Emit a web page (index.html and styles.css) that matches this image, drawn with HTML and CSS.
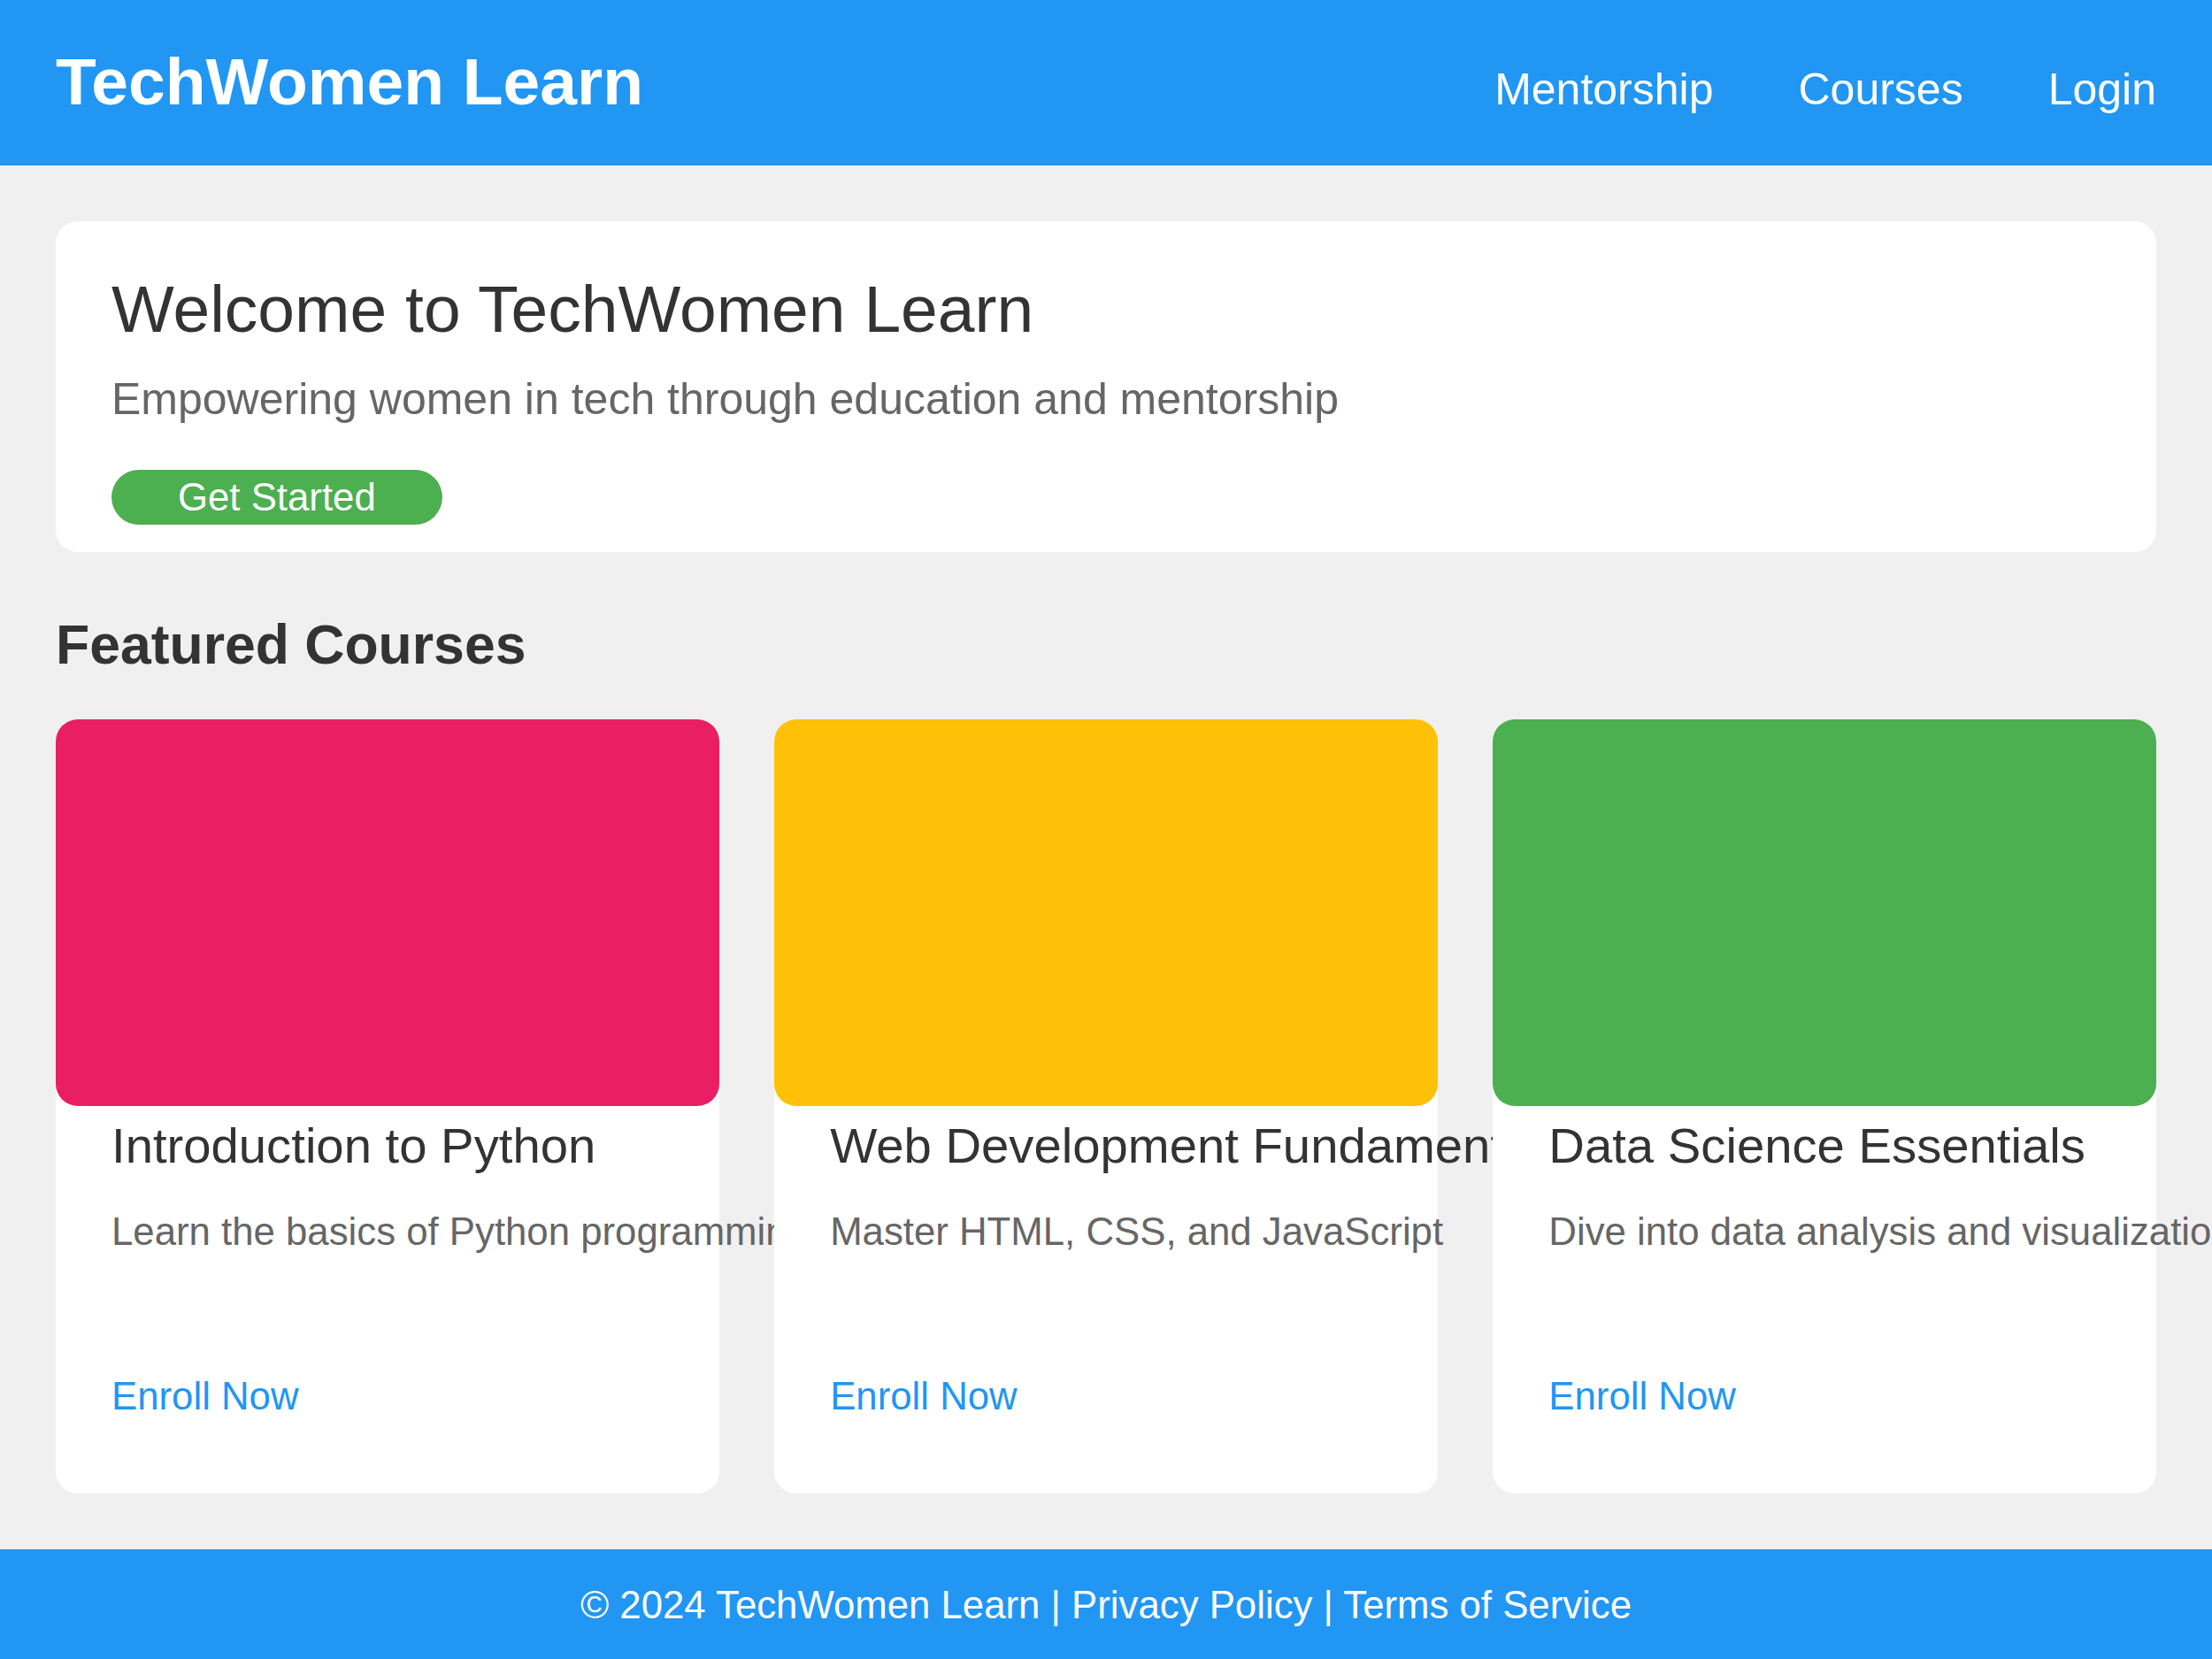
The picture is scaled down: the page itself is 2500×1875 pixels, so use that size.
FILE: index.html
```html
<!DOCTYPE html>
<html lang="en">
<head>
<meta charset="utf-8">
<title>TechWomen Learn</title>
<link rel="stylesheet" href="styles.css">
</head>
<body>
<header class="site-header">
  <div class="logo">TechWomen Learn</div>
  <nav class="nav">
    <a href="#" class="nav-link">Mentorship</a>
    <a href="#" class="nav-link">Courses</a>
    <a href="#" class="nav-link">Login</a>
  </nav>
</header>
<main class="main">
  <section class="hero">
    <h1 class="hero-title">Welcome to TechWomen Learn</h1>
    <p class="hero-text">Empowering women in tech through education and mentorship</p>
    <a href="#" class="btn">Get Started</a>
  </section>
  <h2 class="section-title">Featured Courses</h2>
  <div class="courses">
    <article class="course">
      <div class="course-img pink"></div>
      <div class="course-body">
        <h3 class="course-title">Introduction to Python</h3>
        <p class="course-desc">Learn the basics of Python programming</p>
        <a href="#" class="course-link">Enroll Now</a>
      </div>
    </article>
    <article class="course">
      <div class="course-img amber"></div>
      <div class="course-body">
        <h3 class="course-title">Web Development Fundamentals</h3>
        <p class="course-desc">Master HTML, CSS, and JavaScript</p>
        <a href="#" class="course-link">Enroll Now</a>
      </div>
    </article>
    <article class="course">
      <div class="course-img green"></div>
      <div class="course-body">
        <h3 class="course-title">Data Science Essentials</h3>
        <p class="course-desc">Dive into data analysis and visualization</p>
        <a href="#" class="course-link">Enroll Now</a>
      </div>
    </article>
  </div>
</main>
<footer class="site-footer">© 2024 TechWomen Learn | Privacy Policy | Terms of Service</footer>
</body>
</html>
```

FILE: styles.css
```css
html, body {
  margin: 0;
  padding: 0;
  overflow-x: hidden;
}
body {
  background: #f0f0f0;
  font-family: "Liberation Sans", Arial, sans-serif;
  color: #333;
}
.site-header {
  box-sizing: border-box;
  height: 187px;
  background: #2196f3;
  display: flex;
  justify-content: space-between;
  align-items: baseline;
  padding: 47px 63px 0;
}
.logo {
  font-size: 75px;
  font-weight: bold;
  line-height: 90px;
  color: #fff;
}
.nav {
  display: flex;
  align-items: baseline;
  gap: 96px;
}
.nav-link {
  font-size: 50px;
  line-height: 60px;
  color: #fff;
  text-decoration: none;
}
.main {
  padding: 63px 63px 63px;
}
.hero {
  background: #fff;
  border-radius: 25px;
  padding: 62px 64px 31px 63px;
}
.hero-title {
  margin: 0;
  font-size: 75px;
  font-weight: normal;
  line-height: 75px;
  color: #333;
}
.hero-text {
  margin: 34px 0 0;
  font-size: 50px;
  line-height: 60px;
  color: #666;
}
.btn {
  display: inline-block;
  margin-top: 50px;
  height: 62px;
  line-height: 62px;
  padding: 0 75px;
  border-radius: 31px;
  background: #4caf50;
  color: #fff;
  font-size: 43.75px;
  text-decoration: none;
  vertical-align: top;
}
.section-title {
  margin: 67px 0 0;
  font-size: 62.5px;
  line-height: 75px;
  font-weight: bold;
  color: #333;
}
.courses {
  margin-top: 47px;
  display: grid;
  grid-template-columns: repeat(3, minmax(0, 1fr));
  gap: 62.5px;
}
.course {
  position: relative;
  background: #fff;
  border-radius: 25px;
  min-width: 0;
}
.course-img {
  height: 437px;
  border-radius: 25px;
}
.pink { background: #e91e63; }
.amber { background: #ffc107; }
.green { background: #4caf50; }
.course-body {
  padding: 11px 0 83px 63px;
  white-space: nowrap;
}
.course-title {
  margin: 0;
  font-size: 56.25px;
  line-height: 67.5px;
  font-weight: normal;
  color: #333;
}
.course-desc {
  margin: 37px 0 0;
  font-size: 43.75px;
  line-height: 52.5px;
  color: #666;
}
.course-link {
  display: block;
  margin-top: 134px;
  font-size: 43.75px;
  line-height: 52.5px;
  color: #2196f3;
  text-decoration: none;
}
.site-footer {
  height: 125px;
  line-height: 125px;
  background: #2196f3;
  color: #fff;
  text-align: center;
  font-size: 43.75px;
}
```
